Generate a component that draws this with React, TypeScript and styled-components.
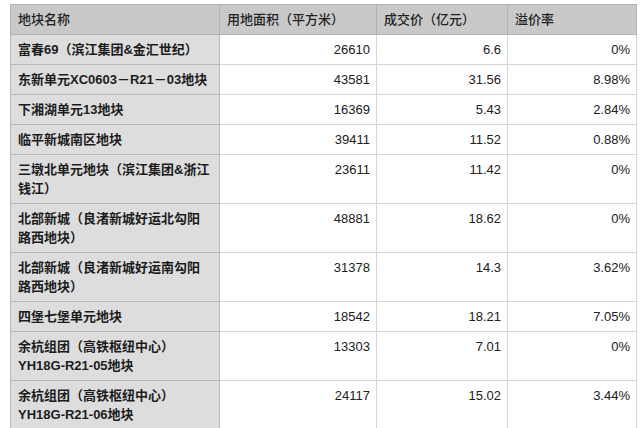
import React from "react";
import styled, { createGlobalStyle } from "styled-components";

const GlobalStyle = createGlobalStyle`
  html, body {
    margin: 0;
    padding: 0;
    background: #ffffff;
  }
  body {
    font-family: "Liberation Sans", "Noto Sans CJK SC", sans-serif;
    color: #1e1e1e;
  }
`;

type Plot = {
  name: string[];
  area: string;
  price: string;
  premium: string;
};

const plots: Plot[] = [
  { name: ["富春69（滨江集团&金汇世纪）"], area: "26610", price: "6.6", premium: "0%" },
  { name: ["东新单元XC0603－R21－03地块"], area: "43581", price: "31.56", premium: "8.98%" },
  { name: ["下湘湖单元13地块"], area: "16369", price: "5.43", premium: "2.84%" },
  { name: ["临平新城南区地块"], area: "39411", price: "11.52", premium: "0.88%" },
  { name: ["三墩北单元地块（滨江集团&浙江", "钱江）"], area: "23611", price: "11.42", premium: "0%" },
  { name: ["北部新城（良渚新城好运北勾阳", "路西地块）"], area: "48881", price: "18.62", premium: "0%" },
  { name: ["北部新城（良渚新城好运南勾阳", "路西地块）"], area: "31378", price: "14.3", premium: "3.62%" },
  { name: ["四堡七堡单元地块"], area: "18542", price: "18.21", premium: "7.05%" },
  { name: ["余杭组团（高铁枢纽中心）", "YH18G-R21-05地块"], area: "13303", price: "7.01", premium: "0%" },
  { name: ["余杭组团（高铁枢纽中心）", "YH18G-R21-06地块"], area: "24117", price: "15.02", premium: "3.44%" },
];

const Page = styled.div`
  padding: 4px 0 0 10px;
`;

const Table = styled.table`
  border-collapse: collapse;
  table-layout: fixed;
  width: 626px;
  font-size: 13px;
  line-height: 19px;

  th, td {
    box-sizing: border-box;
  }
`;

const Col = styled.col<{ $w: number }>`
  width: ${({ $w }) => $w}px;
`;

const HeadCell = styled.th`
  background: #c9c9c9;
  border: 1px solid #b3b3b3;
  padding: 5px 7px;
  text-align: left;
  font-weight: 500;
  color: #222222;
  white-space: nowrap;
  overflow: hidden;
`;

const NameCell = styled.td`
  background: #dddddd;
  border: 1px solid #b8b8b8;
  padding: 5px 7px;
  vertical-align: top;
  font-weight: 700;
  color: #1c1c1c;
  white-space: nowrap;
`;

const NumCell = styled.td`
  background: #ffffff;
  border: 1px solid #d6d6d6;
  padding: 5px 6px;
  vertical-align: top;
  text-align: right;
  color: #202020;
`;

export default function App() {
  return (
    <Page>
      <GlobalStyle />
      <Table>
        <colgroup>
          <Col $w={209} />
          <Col $w={157} />
          <Col $w={131} />
          <Col $w={129} />
        </colgroup>
        <thead>
          <tr>
            <HeadCell>地块名称</HeadCell>
            <HeadCell>用地面积（平方米）</HeadCell>
            <HeadCell>成交价（亿元）</HeadCell>
            <HeadCell>溢价率</HeadCell>
          </tr>
        </thead>
        <tbody>
          {plots.map((p, i) => (
            <tr key={i}>
              <NameCell>
                {p.name.map((line, j) => (
                  <React.Fragment key={j}>
                    {j > 0 && <br />}
                    {line}
                  </React.Fragment>
                ))}
              </NameCell>
              <NumCell>{p.area}</NumCell>
              <NumCell>{p.price}</NumCell>
              <NumCell>{p.premium}</NumCell>
            </tr>
          ))}
        </tbody>
      </Table>
    </Page>
  );
}
